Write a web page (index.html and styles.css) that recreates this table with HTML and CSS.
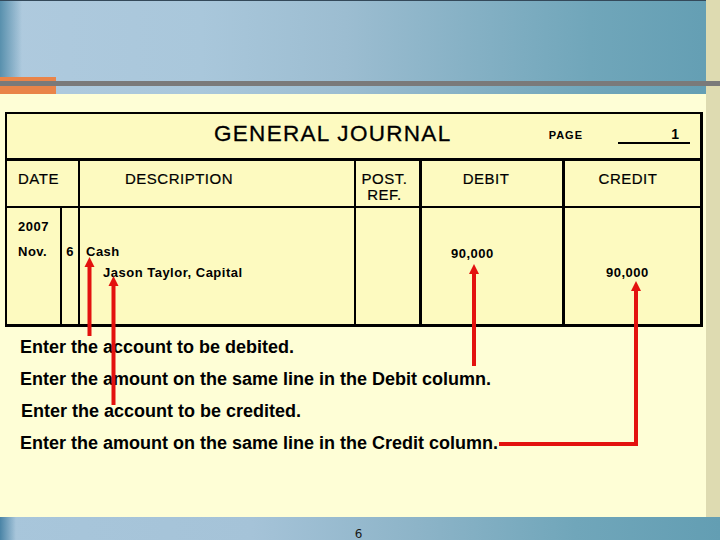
FILE: index.html
```html
<!DOCTYPE html>
<html lang="en">
<head>
<meta charset="utf-8">
<title>General Journal</title>
<link rel="stylesheet" href="styles.css">
</head>
<body>
<div class="slide">
  <header class="banner"></header>
  <div class="middle">
    <main class="content">
      <section class="journal">
        <div class="jtitle">
          <h1 class="jname">GENERAL JOURNAL</h1>
          <span class="page-label">PAGE</span>
          <span class="page-num">1</span>
        </div>
        <div class="jgrid">
          <div class="cell h h-date">DATE</div>
          <div class="cell h h-desc">DESCRIPTION</div>
          <div class="cell h h-ref">POST.<br>REF.</div>
          <div class="cell h h-debit">DEBIT</div>
          <div class="cell h h-credit">CREDIT</div>

          <div class="cell b b-month">2007<br>Nov.</div>
          <div class="cell b b-day">6</div>
          <div class="cell b b-desc">Cash<br><span class="indent">Jason Taylor, Capital</span></div>
          <div class="cell b b-ref"></div>
          <div class="cell b b-debit">90,000</div>
          <div class="cell b b-credit">90,000</div>
        </div>
      </section>
      <div class="notes">
        <p>Enter the account to be debited.</p>
        <p>Enter the amount on the same line in the Debit column.</p>
        <p class="shift">Enter the account to be credited.</p>
        <p>Enter the amount on the same line in the Credit column.</p>
      </div>
    </main>
    <aside class="rstrip"></aside>
  </div>
  <footer class="footer"><span class="pageno">6</span></footer>
  <svg class="arrows" width="720" height="540" viewBox="0 0 720 540" aria-hidden="true">
    <g fill="#e3120f" stroke="none">
      <polygon points="89.5,257 84.5,267 94.5,267"/>
      <polygon points="113.5,276 108.5,286 118.5,286"/>
      <polygon points="474,264 469,274 479,274"/>
      <polygon points="636,281 631,291 641,291"/>
    </g>
    <g stroke="#e3120f" stroke-width="4" fill="none" stroke-linejoin="miter">
      <line x1="89.5" y1="266" x2="89.5" y2="336"/>
      <line x1="113.5" y1="285" x2="113.5" y2="405"/>
      <line x1="474" y1="273" x2="474" y2="366"/>
      <polyline points="636,290 636,444 499,444"/>
    </g>
  </svg>
</div>
</body>
</html>
```

FILE: styles.css
```css
* { box-sizing: border-box; }

html, body {
  margin: 0;
  padding: 0;
  background: #fefed6;
}

.slide {
  position: relative;
  width: 720px;
  height: 540px;
  overflow: hidden;
  display: flex;
  flex-direction: column;
  font-family: "Liberation Sans", Arial, sans-serif;
  color: #000;
}

.banner {
  flex: none;
  height: 94px;
  background:
    linear-gradient(#7a7a7a, #7a7a7a) 0 81px / 100% 5px no-repeat,
    linear-gradient(#e98449, #e98449) 0 77px / 56px 17px no-repeat,
    linear-gradient(#dedbb1, #dedbb1) right 0 top 0 / 14px 100% no-repeat,
    linear-gradient(#34495a, #34495a) 0 0 / 100% 1px no-repeat,
    linear-gradient(to right, #5890ad 0, rgba(175, 202, 222, 0) 22px) 0 0 / 30px 100% no-repeat,
    linear-gradient(to right, #afcade 0%, #a9c7db 28%, #9cbdd1 48%, #86b1c5 65%, #70a6ba 82%, #639eb3 100%);
}

.middle {
  flex: 1;
  display: flex;
  min-height: 0;
}

.content {
  flex: 1;
  background: #fefed6;
  padding-top: 18px;
}

.rstrip {
  flex: none;
  width: 14px;
  background: #dedbb1;
}

/* Journal */
.journal {
  margin: 0 3px 0 5px;
  border-style: solid;
  border-color: #000;
  border-width: 2px 3px 3px 2px;
  background: #fdfac0;
}

.jtitle {
  display: flex;
  align-items: flex-start;
  height: 47px;
  border-bottom: 3px solid #000;
}

.jname {
  margin: 0 0 0 207px;
  padding-top: 7px;
  font-size: 22.5px;
  line-height: 26px;
  font-weight: normal;
  letter-spacing: 1.3px;
  -webkit-text-stroke: 0.3px #000;
}

.page-label {
  margin-left: auto;
  margin-top: 15px;
  font-size: 11px;
  line-height: 13px;
  font-weight: bold;
  letter-spacing: 1px;
}

.page-num {
  width: 72px;
  height: 18px;
  margin: 12px 10px 0 35px;
  padding-right: 11px;
  border-bottom: 2px solid #000;
  text-align: right;
  font-size: 14px;
  line-height: 16px;
  font-weight: bold;
}

.jgrid {
  display: grid;
  grid-template-columns: 53px 18px 276px 65px 143px 138px;
  grid-template-rows: 47px 116px;
}

.cell { border-left: 2px solid #000; }
.h-date, .b-month { border-left: 0; }
.h-debit, .h-credit, .b-debit, .b-credit { border-left-width: 3px; }

.h {
  border-bottom: 2px solid #000;
  padding-top: 10px;
  font-size: 15px;
  line-height: 16px;
  letter-spacing: 0.5px;
  -webkit-text-stroke: 0.2px #000;
}

.h-date { grid-column: 1 / span 2; padding-left: 11px; }
.h-desc { padding-left: 45px; }
.h-ref { text-align: center; padding-right: 6px; }
.h-debit { text-align: center; padding-right: 12px; }
.h-credit { text-align: center; padding-right: 9px; }

.b {
  font-size: 13px;
  font-weight: bold;
  letter-spacing: 0.5px;
  line-height: 21px;
}

.b-month { padding: 6px 0 0 11px; line-height: 25px; }
.b-day { padding-top: 33px; text-align: center; }
.b-desc { padding: 33px 0 0 6px; }
.indent { padding-left: 17px; }
.b-debit { padding: 35px 0 0 29px; }
.b-credit { padding: 54px 0 0 41px; }

/* Notes */
.notes {
  margin-top: 4px;
  padding-left: 20px;
}

.notes p {
  margin: 0;
  font-size: 18px;
  line-height: 32px;
  font-weight: bold;
}

.notes .shift { padding-left: 1px; }

/* Footer */
.footer {
  flex: none;
  height: 23px;
  padding: 7px 3px 0 0;
  text-align: center;
  background:
    linear-gradient(to right, #4a84a6 0, rgba(168, 198, 219, 0) 16px) 0 0 / 30px 100% no-repeat,
    linear-gradient(to right, #a8c6db 0%, #a5c3d8 35%, #8db4c8 58%, #70a6ba 80%, #639eb3 100%);
}

.pageno {
  font-family: "DejaVu Sans", sans-serif;
  font-size: 12px;
  line-height: 14px;
  color: #1a1a1a;
}

.arrows {
  position: absolute;
  left: 0;
  top: 0;
  pointer-events: none;
}
```
